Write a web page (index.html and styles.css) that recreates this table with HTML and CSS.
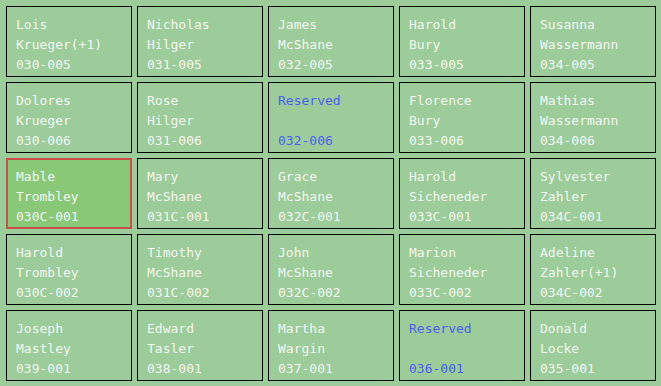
FILE: index.html
```html
<!DOCTYPE html>
<html>
<head>
<meta charset="utf-8">
<link rel="stylesheet" href="styles.css">
</head>
<body>
<div class="grid">
  <div class="cell"><div>Lois</div><div>Krueger(+1)</div><div>030-005</div></div>
  <div class="cell"><div>Nicholas</div><div>Hilger</div><div>031-005</div></div>
  <div class="cell"><div>James</div><div>McShane</div><div>032-005</div></div>
  <div class="cell"><div>Harold</div><div>Bury</div><div>033-005</div></div>
  <div class="cell"><div>Susanna</div><div>Wassermann</div><div>034-005</div></div>

  <div class="cell"><div>Dolores</div><div>Krueger</div><div>030-006</div></div>
  <div class="cell"><div>Rose</div><div>Hilger</div><div>031-006</div></div>
  <div class="cell reserved"><div>Reserved</div><div>&nbsp;</div><div>032-006</div></div>
  <div class="cell"><div>Florence</div><div>Bury</div><div>033-006</div></div>
  <div class="cell"><div>Mathias</div><div>Wassermann</div><div>034-006</div></div>

  <div class="cell selected"><div>Mable</div><div>Trombley</div><div>030C-001</div></div>
  <div class="cell"><div>Mary</div><div>McShane</div><div>031C-001</div></div>
  <div class="cell"><div>Grace</div><div>McShane</div><div>032C-001</div></div>
  <div class="cell"><div>Harold</div><div>Sicheneder</div><div>033C-001</div></div>
  <div class="cell"><div>Sylvester</div><div>Zahler</div><div>034C-001</div></div>

  <div class="cell"><div>Harold</div><div>Trombley</div><div>030C-002</div></div>
  <div class="cell"><div>Timothy</div><div>McShane</div><div>031C-002</div></div>
  <div class="cell"><div>John</div><div>McShane</div><div>032C-002</div></div>
  <div class="cell"><div>Marion</div><div>Sicheneder</div><div>033C-002</div></div>
  <div class="cell"><div>Adeline</div><div>Zahler(+1)</div><div>034C-002</div></div>

  <div class="cell"><div>Joseph</div><div>Mastley</div><div>039-001</div></div>
  <div class="cell"><div>Edward</div><div>Tasler</div><div>038-001</div></div>
  <div class="cell"><div>Martha</div><div>Wargin</div><div>037-001</div></div>
  <div class="cell reserved"><div>Reserved</div><div>&nbsp;</div><div>036-001</div></div>
  <div class="cell"><div>Donald</div><div>Locke</div><div>035-001</div></div>
</div>
</body>
</html>
```
FILE: styles.css
```css
html, body {
  margin: 0;
  padding: 0;
  background: #9bcc99;
}
.grid {
  display: grid;
  grid-template-columns: repeat(5, 126px);
  grid-template-rows: repeat(5, 71px);
  gap: 5px;
  padding: 6px 5px 5px 6px;
  font-family: "DejaVu Sans Mono", "Liberation Mono", monospace;
  font-size: 13px;
  line-height: 20px;
  color: #f4f6f2;
}
.cell {
  box-sizing: border-box;
  border: 1px solid #000;
  padding: 8px 0 0 9px;
  white-space: nowrap;
  overflow: hidden;
}
.cell.reserved {
  color: #4b5ff0;
}
.cell.selected {
  border: 2px solid #c84f4a;
  background: #88c877;
  padding: 7px 0 0 8px;
}
```
